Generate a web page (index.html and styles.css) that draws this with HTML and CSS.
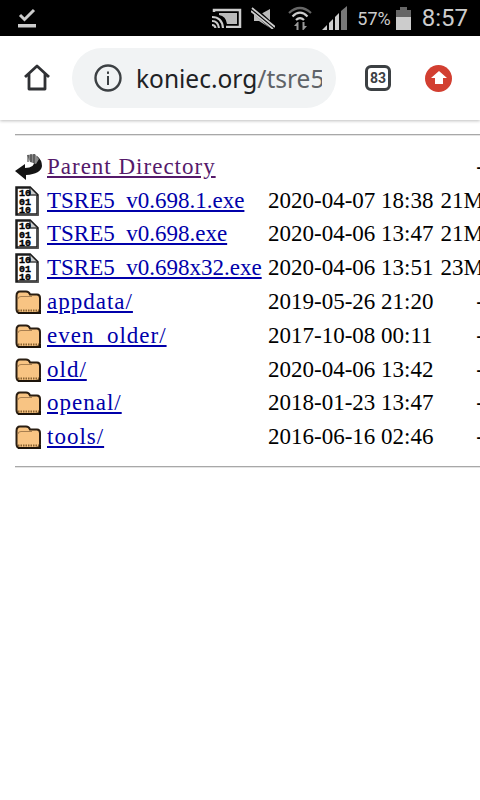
FILE: index.html
```html
<!DOCTYPE html>
<html lang="en">
<head>
  <meta charset="UTF-8" />
  <title>Index of /tsre5</title>
  <link rel="stylesheet" href="styles.css">
</head>
<body>
  <svg class="defs" width="0" height="0">
    <symbol id="bin" viewBox="0 0 24 30">
      <path d="M1.500 1.500H15L22.500 9V28.500H1.500Z" fill="#fff" stroke="#1c1c1c" stroke-width="2.500"/>
      <path d="M15 2V9H22" fill="#ccc" stroke="#444" stroke-width="1.500"/>
      <path d="M23 10V29H3" fill="none" stroke="#555" stroke-width="1.500"/>
    </symbol>
    <symbol id="folder" viewBox="0 0 26 24">
      <path d="M1.500 6Q1.500 1.500 5 1.500H11Q14 1.500 15 4.500H22Q25 4.500 25 8V19Q25 23 21 23H5Q1.500 23 1.500 19Z" fill="#f8c483" stroke="#2a1e12" stroke-width="2"/>
      <path d="M3 9Q3 6.500 6 6.500H17" fill="none" stroke="#a87f50" stroke-width="1"/>
      <path d="M3 20.500H24" stroke="#8a6330" stroke-width="2" stroke-dasharray="1.500 1"/>
      <path d="M3 23H25V20" fill="none" stroke="#1d140a" stroke-width="2"/>
    </symbol>
  </svg>

  <div class="status-bar">
    <svg class="notif" width="18" height="22" viewBox="0 0 18 22">
      <path d="M2 8L6.500 12.500L16 3" fill="none" stroke="#ccc" stroke-width="3"/>
      <rect y="17" x="0" width="18" height="3.500" fill="#ccc"/>
    </svg>
    <div class="status-right">
      <svg class="i-cast" width="31" height="20" viewBox="0 0 31 20">
        <path d="M3 4V2H29V19H15" fill="none" stroke="#ccc" stroke-width="2.500"/>
        <path d="M8 5H26V16H16Q15 8 8 7Z" fill="#bbb"/>
        <path d="M1 9Q11 9 12 20M1 13Q7 13 8 20M1 17Q4 17 4.500 20" fill="none" stroke="#ccc" stroke-width="2.200"/>
      </svg>
      <svg class="i-mute" width="24" height="22" viewBox="0 0 24 22">
        <path d="M19 2V21L8 14H3V8H8Z" fill="#bbb"/>
        <path d="M1 1L24 22" stroke="#000" stroke-width="6"/>
        <path d="M1 1L24 20M0 4L22 22" stroke="#ccc" stroke-width="1.800"/>
      </svg>
      <svg width="24" height="26" viewBox="0 0 24 26">
        <path d="M1 8Q12 -2 23 8" fill="none" stroke="#666" stroke-width="2.200"/>
        <path d="M4.500 11.500Q12 4 19.500 11.500M8 15Q12 11 16 15" fill="none" stroke="#ccc" stroke-width="2.200"/>
        <path d="M10.500 17V25H8.500V21H6L9.500 17ZM14.500 17H16.500V21H19L15.500 25H14.500Z" fill="#999"/>
      </svg>
      <svg width="25" height="26" viewBox="0 0 25 26">
        <path d="M0 25L5 20V25Z" fill="#ccc"/>
        <path d="M7 25V18L11 14V25Z" fill="#ccc"/>
        <path d="M13 25V12L17 8V25Z" fill="#ccc"/>
        <path d="M19 25V6L25 1V25Z" fill="#777"/>
      </svg>
      <span class="battery-pct">57%</span>
      <svg class="i-battery" width="15" height="23" viewBox="0 0 15 23">
        <path d="M4 0H11V3H15V10H0V3H4Z" fill="#666"/>
        <rect y="10" width="15" height="13" fill="#ccc"/>
      </svg>
      <span class="clock">8:57</span>
    </div>
  </div>

  <div class="toolbar">
    <svg class="home" width="28" height="28" viewBox="0 0 28 28">
      <path d="M2 13L14 2L26 13M6 10V25H22V10" fill="none" stroke="#2f3134" stroke-width="2.800" stroke-linejoin="round"/>
    </svg>
    <div class="omnibox">
      <svg width="28" height="28" viewBox="0 0 28 28">
        <circle cx="14" cy="14" r="12.500" fill="none" stroke="#3c4043" stroke-width="2.400"/>
        <rect x="13" y="12" width="2" height="9" fill="#3c4043"/>
        <rect x="13" y="7.500" width="2" height="2.400" fill="#3c4043"/>
      </svg>
      <div class="url">koniec.org<span class="url-path">/tsre5/</span></div>
    </div>
    <div class="tabs-count">83</div>
    <div class="update">
      <svg width="16" height="14" viewBox="0 0 16 14">
        <path d="M8 0L16 7H12V13H4V7H0Z" fill="#fff"/>
      </svg>
    </div>
  </div>

  <main class="listing">
    <hr class="rule">
    <table class="files">
      <tr class="dir">
        <td class="ico">
          <svg width="28" height="28" viewBox="0 0 28 28">
            <path d="M0 18L10 11V15Q20 15 19 8L22 3Q27 7 27 13Q26 21 11 22V27Z" fill="#141414"/>
            <path d="M12 2L20 1L24 6L21 11L15 9Z" fill="#8a8a8a"/>
            <path d="M13 2V9M16 1V9M19 1V10" stroke="#333" stroke-width="1"/>
          </svg>
        </td>
        <td class="name"><a class="visited" href="#">Parent Directory</a></td>
        <td class="date"></td>
        <td class="size">-</td>
      </tr>
      <tr>
        <td class="ico"><svg class="i-bin" viewBox="0 0 24 30"><use href="#bin"/><text class="bits" x="4" y="10" textLength="12" lengthAdjust="spacingAndGlyphs">10</text><text class="bits" x="4" y="18.500" textLength="12" lengthAdjust="spacingAndGlyphs">01</text><text class="bits" x="4" y="27" textLength="12" lengthAdjust="spacingAndGlyphs">10</text></svg></td>
        <td class="name"><a href="#">TSRE5_v0.698.1.exe</a></td>
        <td class="date">2020-04-07 18:38</td>
        <td class="size">21M</td>
      </tr>
      <tr>
        <td class="ico"><svg class="i-bin" viewBox="0 0 24 30"><use href="#bin"/><text class="bits" x="4" y="10" textLength="12" lengthAdjust="spacingAndGlyphs">10</text><text class="bits" x="4" y="18.500" textLength="12" lengthAdjust="spacingAndGlyphs">01</text><text class="bits" x="4" y="27" textLength="12" lengthAdjust="spacingAndGlyphs">10</text></svg></td>
        <td class="name"><a href="#">TSRE5_v0.698.exe</a></td>
        <td class="date">2020-04-06 13:47</td>
        <td class="size">21M</td>
      </tr>
      <tr>
        <td class="ico"><svg class="i-bin" viewBox="0 0 24 30"><use href="#bin"/><text class="bits" x="4" y="10" textLength="12" lengthAdjust="spacingAndGlyphs">10</text><text class="bits" x="4" y="18.500" textLength="12" lengthAdjust="spacingAndGlyphs">01</text><text class="bits" x="4" y="27" textLength="12" lengthAdjust="spacingAndGlyphs">10</text></svg></td>
        <td class="name"><a href="#">TSRE5_v0.698x32.exe</a></td>
        <td class="date">2020-04-06 13:51</td>
        <td class="size">23M</td>
      </tr>
      <tr class="dir">
        <td class="ico"><svg class="i-folder"><use href="#folder"/></svg></td>
        <td class="name"><a href="#">appdata/</a></td>
        <td class="date">2019-05-26 21:20</td>
        <td class="size">-</td>
      </tr>
      <tr class="dir">
        <td class="ico"><svg class="i-folder"><use href="#folder"/></svg></td>
        <td class="name"><a href="#">even_older/</a></td>
        <td class="date">2017-10-08 00:11</td>
        <td class="size">-</td>
      </tr>
      <tr class="dir">
        <td class="ico"><svg class="i-folder"><use href="#folder"/></svg></td>
        <td class="name"><a href="#">old/</a></td>
        <td class="date">2020-04-06 13:42</td>
        <td class="size">-</td>
      </tr>
      <tr class="dir">
        <td class="ico"><svg class="i-folder"><use href="#folder"/></svg></td>
        <td class="name"><a href="#">openal/</a></td>
        <td class="date">2018-01-23 13:47</td>
        <td class="size">-</td>
      </tr>
      <tr class="dir">
        <td class="ico"><svg class="i-folder"><use href="#folder"/></svg></td>
        <td class="name"><a href="#">tools/</a></td>
        <td class="date">2016-06-16 02:46</td>
        <td class="size">-</td>
      </tr>
    </table>
    <hr class="rule">
  </main>
</body>
</html>
```

FILE: styles.css
```css
html, body {
  margin: 0;
  padding: 0;
  width: 480px;
  height: 800px;
  overflow: hidden;
  background: #fff;
}

.defs {
  position: absolute;
}

.bits {
  font-family: "Liberation Mono", monospace;
  font-size: 9.500px;
  font-weight: bold;
  fill: #000;
  stroke: #000;
  stroke-width: 0.400px;
}

.status-bar {
  height: 36px;
  background: #000;
  display: flex;
  align-items: center;
  justify-content: space-between;
  padding: 0 12px 0 18px;
  color: #ccc;
  font-family: Roboto, sans-serif;
}

.status-right {
  display: flex;
  align-items: center;
  gap: 10px;
}

.i-cast {
  margin-right: -1px;
}

.i-mute {
  margin-right: 3px;
}

.battery-pct {
  font-size: 18px;
}

.i-battery {
  margin-left: -5px;
}

.clock {
  font-size: 24px;
  margin-left: 1px;
}

.toolbar {
  height: 84px;
  display: flex;
  align-items: center;
  background: #fff;
  box-shadow: 0 1px 3px rgba(0, 0, 0, 0.25);
  font-family: "Noto Sans", sans-serif;
}

.home {
  margin-left: 23px;
}

.omnibox {
  width: 264px;
  height: 60px;
  margin-left: 21px;
  padding: 0 14px 0 22px;
  box-sizing: border-box;
  display: flex;
  align-items: center;
  gap: 14px;
  background: #f1f3f4;
  border-radius: 30px;
}

.url {
  font-size: 24.500px;
  color: #202124;
  white-space: nowrap;
  overflow: hidden;
  flex: 1;
}

.url-path {
  color: #5f6368;
}

.tabs-count {
  width: 20px;
  height: 20px;
  margin-left: 29px;
  border: 3px solid #3c4043;
  border-radius: 6px;
  display: flex;
  align-items: center;
  justify-content: center;
  font-family: Roboto, sans-serif;
  font-size: 14px;
  font-weight: bold;
  color: #3c4043;
}

.update {
  width: 27px;
  height: 27px;
  margin-left: 34px;
  border-radius: 50%;
  background: #d23f31;
  display: flex;
  align-items: center;
  justify-content: center;
}

.listing {
  padding: 14px 0 0 15px;
  font-family: "Liberation Serif", serif;
  font-size: 23px;
  color: #000;
}

.rule {
  margin: 0;
  height: 1px;
  border: none;
  border-bottom: 1px solid #e4e4e4;
  background: #a8a8a8;
}

.files {
  width: 469px;
  table-layout: fixed;
  border-collapse: collapse;
  margin: 14px 0 12px;
  white-space: nowrap;
}

.files td {
  padding: 0;
  height: 33.800px;
}

.ico {
  width: 32px;
  line-height: 0;
}

.name {
  width: 221px;
}

.date {
  width: 172px;
}

.size {
  text-align: right;
}

.files a {
  color: #0000aa;
}

.files a.visited {
  color: #551a6b;
}

.dir a {
  letter-spacing: 1px;
}

.i-bin {
  width: 24px;
  height: 30px;
}

.i-folder {
  width: 26px;
  height: 24px;
}
```
